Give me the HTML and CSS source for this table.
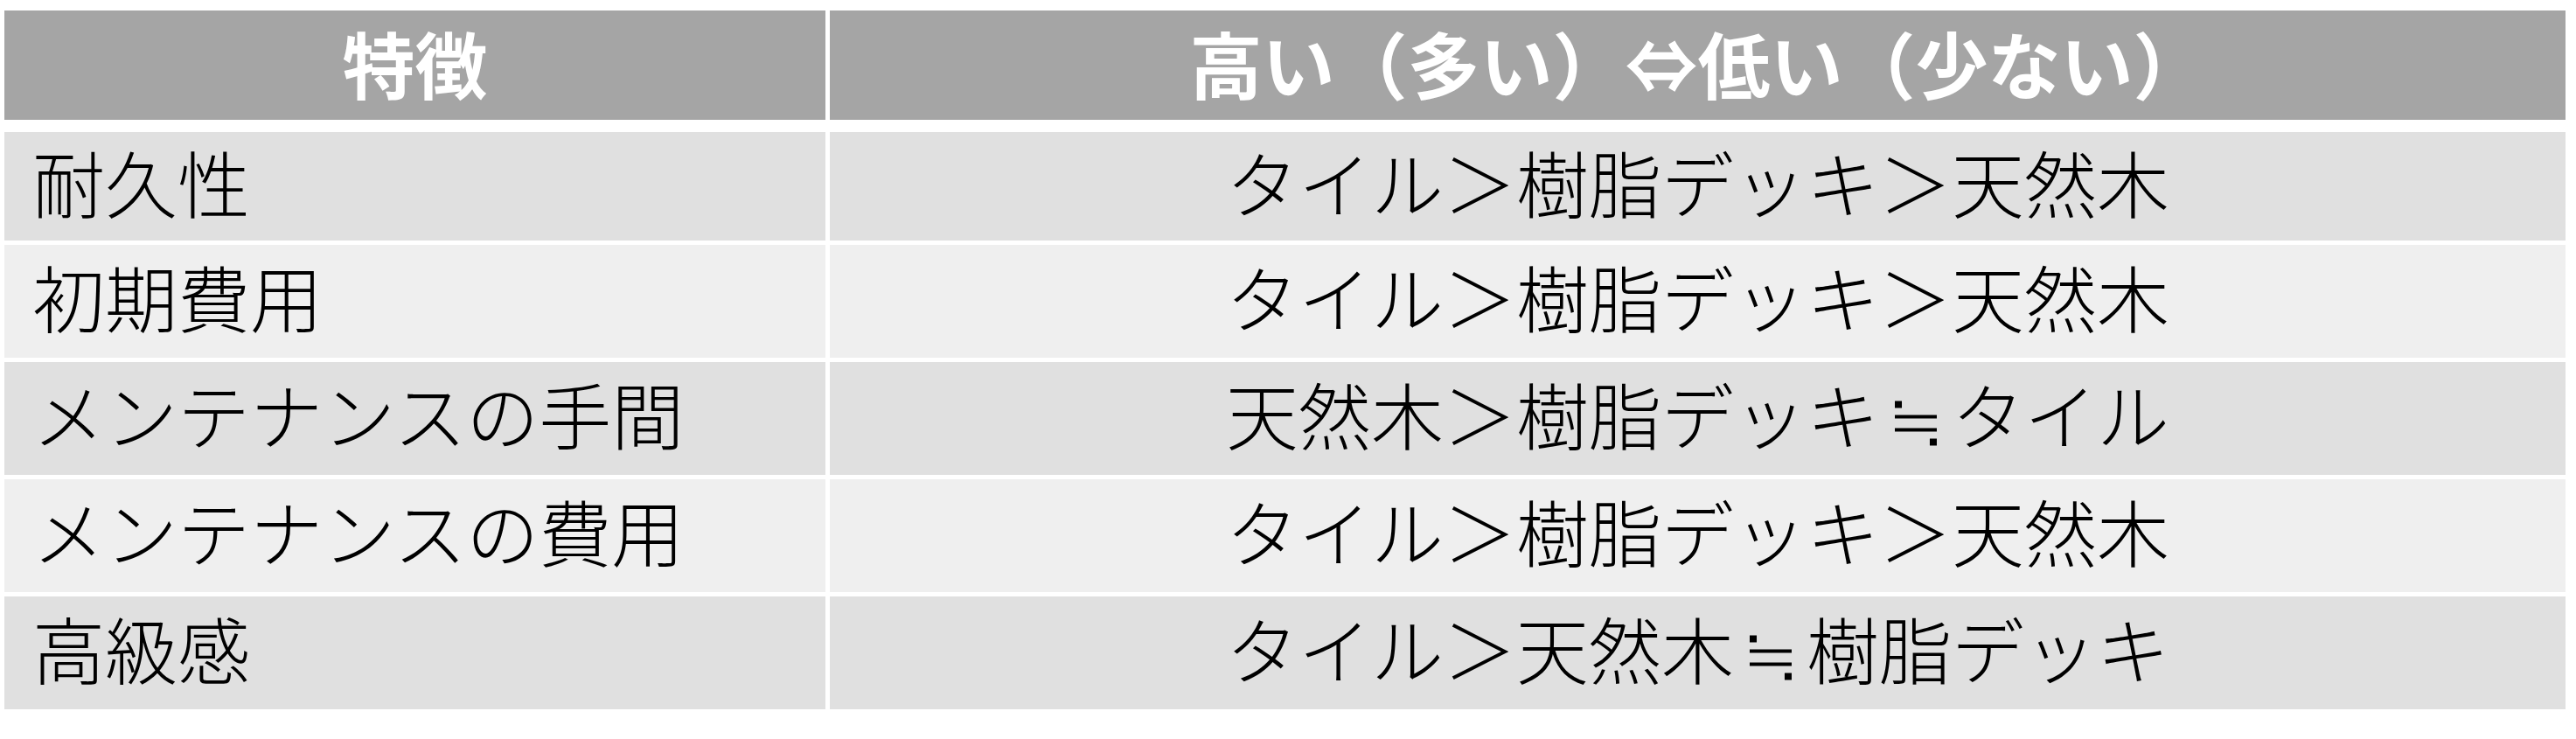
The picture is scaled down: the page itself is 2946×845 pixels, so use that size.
FILE: index.html
```html
<!DOCTYPE html>
<html lang="ja">
<head>
<meta charset="utf-8">
<title>特徴比較</title>
<link rel="stylesheet" href="styles.css">
</head>
<body>
<div class="table">
  <div class="cell head">特徴</div>
  <div class="cell head">高い（多い）⇔低い（少ない）</div>
  <div class="cell odd label">耐久性</div>
  <div class="cell odd value">タイル＞樹脂デッキ＞天然木</div>
  <div class="cell even label">初期費用</div>
  <div class="cell even value">タイル＞樹脂デッキ＞天然木</div>
  <div class="cell odd label">メンテナンスの手間</div>
  <div class="cell odd value">天然木＞樹脂デッキ<span class="sym">≒</span>タイル</div>
  <div class="cell even label">メンテナンスの費用</div>
  <div class="cell even value">タイル＞樹脂デッキ＞天然木</div>
  <div class="cell odd label">高級感</div>
  <div class="cell odd value">タイル＞天然木<span class="sym">≒</span>樹脂デッキ</div>
</div>
</body>
</html>
```

FILE: styles.css
```css
html, body {
  margin: 0;
  padding: 0;
  background: #ffffff;
}

body {
  font-family: "Noto Sans CJK JP", "Noto Sans", sans-serif;
  padding: 12px 0 0 5px;
}

.table {
  display: grid;
  grid-template-columns: 939px 1985px;
  grid-template-rows: 134px 124px 129px 129px 129px 129px;
  column-gap: 5px;
  row-gap: 5px;
  width: 2929px;
}

.cell {
  display: flex;
  align-items: center;
  font-size: 83px;
  line-height: 1;
  color: #000000;
  font-weight: 300;
  padding-bottom: 12px;
  box-sizing: border-box;
  white-space: nowrap;
}

.head {
  background: #a5a5a5;
  color: #ffffff;
  font-weight: 700;
  justify-content: center;
  padding-bottom: 6px;
  margin-bottom: 9px;
}

.odd {
  background: #e0e0e0;
}

.even {
  background: #efefef;
}

.label {
  padding-left: 32px;
}

.value {
  justify-content: center;
}

.sym {
  display: inline-block;
  width: 1em;
  text-align: center;
}
```
